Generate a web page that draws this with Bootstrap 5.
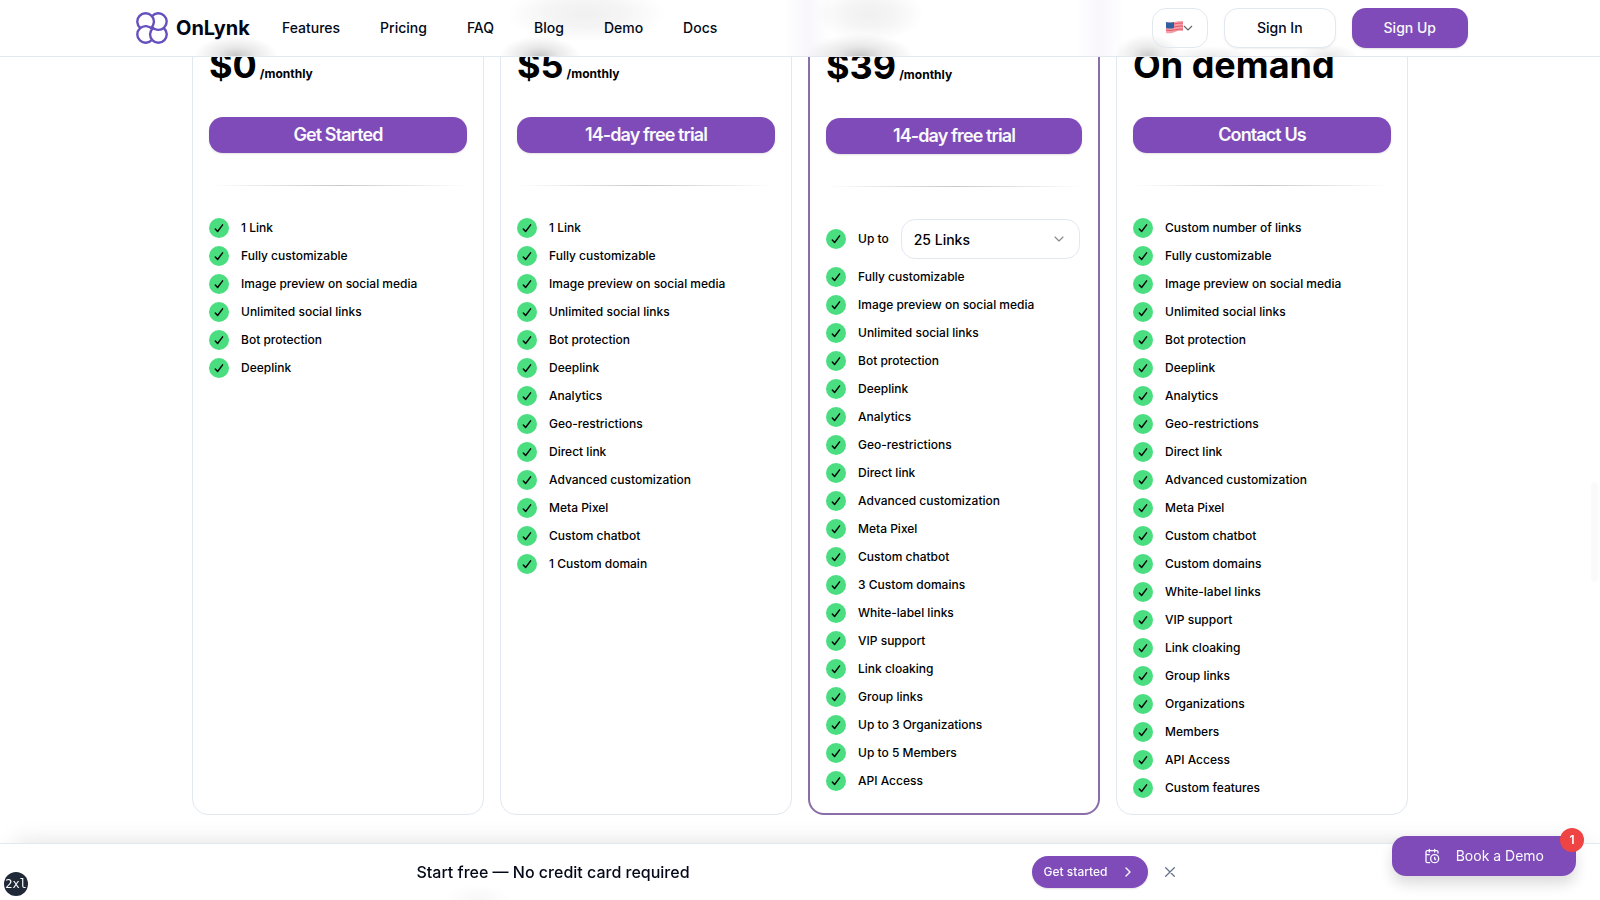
<!DOCTYPE html>
<html lang="en">
<head>
<meta charset="utf-8">
<meta name="viewport" content="width=device-width, initial-scale=1">
<title>OnLynk – Pricing</title>
<link rel="stylesheet" href="https://cdn.jsdelivr.net/npm/bootstrap@5.3.0/dist/css/bootstrap.min.css">
<style>
  :root { --brand: #7f4bb8; --line: #e2e8f0; --ink: #020817; }
  body { font-family: Inter, "Liberation Sans", sans-serif; color: #000; font-size: 14px; line-height: 20px; }
  .site-header { background: #fff; border-bottom: 1px solid var(--line); z-index: 1030; }
  .header-inner { max-width: 1400px; padding: 8px 32px 8px 36px; gap: 32px; position: relative; }
  .brand { font-size: 20px; font-weight: 700; line-height: 28px; color: var(--ink); gap: 8px; }
  .menu { gap: 40px; }
  .menu a { color: var(--ink); font-weight: 500; text-decoration: none; }
  .btn { --bs-btn-font-size: 14px; --bs-btn-font-weight: 500; --bs-btn-line-height: 20px; --bs-btn-border-radius: 14px; }
  .btn-brand { --bs-btn-color: #f8fafc; --bs-btn-bg: var(--brand); --bs-btn-border-color: var(--brand); --bs-btn-border-width: 0; --bs-btn-hover-color: #fff; --bs-btn-hover-bg: #7341a9; box-shadow: 0 1px 2px rgba(0,0,0,.12); }
  .btn-plain { --bs-btn-color: var(--ink); --bs-btn-bg: #fff; --bs-btn-border-color: var(--line); --bs-btn-hover-bg: #f8fafc; --bs-btn-hover-border-color: var(--line); box-shadow: 0 1px 2px rgba(0,0,0,.06); }
  .btn-header { height: 40px; padding: 0 32px; }
  .btn-lang { height: 40px; padding: 0 14px 0 13px; border: 1px solid var(--line); }
  .pricing, .frost { max-width: 1280px; padding: 0 32px; }
  .pricing { margin-top: -16px; }
  .plans { display: grid; grid-template-columns: repeat(4, minmax(0, 1fr)); gap: 16px; }
  /* soft shadows of the cards that scroll beneath the header */
  .frost { position: absolute; inset: 0; }
  .frost .plans { height: 100%; }
  .haze-1 { background: radial-gradient(42px 20px at 44px 100%, rgba(0,0,0,.22), rgba(0,0,0,.09) 45%, transparent); }
  .haze-2 { background: radial-gradient(40px 20px at 40px 100%, rgba(0,0,0,.22), rgba(0,0,0,.09) 45%, transparent), radial-gradient(80px 28px at 86px 14px, rgba(0,0,0,.06), rgba(0,0,0,.04) 50%, transparent); }
  .haze-3 { margin: 0 -24px; background: radial-gradient(54px 22px at 76px 100%, rgba(0,0,0,.22), rgba(0,0,0,.09) 45%, transparent), radial-gradient(54px 28px at 86px 14px, rgba(0,0,0,.06), rgba(0,0,0,.04) 50%, transparent), linear-gradient(90deg, transparent, rgba(127,75,184,.05) 24px, transparent 48px, transparent calc(100% - 48px), rgba(127,75,184,.05) calc(100% - 24px), transparent); }
  .haze-4 { background: radial-gradient(34px 22px at 32px 100%, rgba(0,0,0,.2), rgba(0,0,0,.08) 45%, transparent), radial-gradient(44px 10px at 94px 100%, rgba(0,0,0,.08), transparent), radial-gradient(30px 12px at 212px 100%, rgba(0,0,0,.09), transparent); }
  .plan { border: 1px solid var(--line); border-radius: 16px; padding: 16px; background: #fff; }
  .plan-featured { border: 2px solid #8a6ea8; }
  .price { display: flex; align-items: baseline; gap: 3px; height: 40px; font-size: 36px; line-height: 40px; font-weight: 700; margin: 44px 0 32px; }
  .price small { font-size: 12px; font-weight: 700; }
  .btn-plan { height: 36px; padding: 0 16px; --bs-btn-font-size: 18px; --bs-btn-font-weight: 600; --bs-btn-line-height: 28px; letter-spacing: -.05em; }
  .rule { height: 1px; border: 0; opacity: 1; margin: 32px 0; background: linear-gradient(90deg, transparent, #c9c9c9, transparent); }
  .feats { display: flex; flex-direction: column; gap: 8px; font-size: 12px; line-height: 20px; font-weight: 500; }
  .feats li { display: flex; align-items: center; gap: 12px; }
  .feats li::before { content: ""; flex: none; width: 20px; height: 20px; border-radius: 50%; background: #4ade80 url("data:image/svg+xml,%3Csvg xmlns='http://www.w3.org/2000/svg' viewBox='0 0 20 20' fill='none' stroke='black' stroke-width='1.4' stroke-linecap='round' stroke-linejoin='round'%3E%3Cpath d='M6.3 11.1l2.3 2.4 5-6.7'/%3E%3C/svg%3E"); }
  .feats select { height: 40px; font-size: 14px; font-weight: 500; border: 1px solid var(--line); border-radius: 14px; padding: 0 12px; color: #000; background-size: 16px; background-position: right 12px center; margin-right: 2px; background-image: url("data:image/svg+xml,%3Csvg xmlns='http://www.w3.org/2000/svg' viewBox='0 0 16 16' fill='none' stroke='%23888' stroke-width='1.1' stroke-linecap='round' stroke-linejoin='round'%3E%3Cpath d='M4 6l4 4 4-4'/%3E%3C/svg%3E"); }
  .promo { border-top: 1px solid var(--line); background: radial-gradient(34px 16px at 478px 100%, rgba(0,0,0,.03), transparent) #fff; height: 57px; gap: 342px; box-shadow: 0 -14px 24px -14px rgba(0,0,0,.12); z-index: 1020; font-size: 16px; font-weight: 500; color: var(--ink); }
  .btn-pill { --bs-btn-border-radius: 16px; --bs-btn-font-size: 12px; height: 32px; padding: 0 12px; gap: 12px; }
  .btn-dismiss { border: 0; background: none; padding: 0; color: #64748b; width: 28px; height: 28px; }
  .demo { right: 24px; bottom: 24px; z-index: 1040; }
  .btn-demo { height: 40px; padding: 0 32px; gap: 16px; --bs-btn-font-weight: 400; box-shadow: 0 8px 14px rgba(0,0,0,.14); }
  .count { top: -8px; right: -8px; width: 24px; height: 24px; background: #ef4444; color: #fff; font-size: 12px; font-weight: 600; }
  .bp { left: 4px; bottom: 4px; width: 24px; height: 24px; background: #1f2937; color: #fff; font: 12px "DejaVu Sans Mono", monospace; z-index: 1050; }
  .side-tab { right: 2px; top: 482px; width: 7px; height: 100px; border-radius: 4px; background: #fafafa; }
</style>
</head>
<body>
<header class="site-header fixed-top">
  <div class="frost mx-auto" aria-hidden="true"><div class="plans"><div class="haze-1"></div><div class="haze-2"></div><div class="haze-3"></div><div class="haze-4"></div></div></div>
  <div class="header-inner d-flex align-items-center mx-auto">
    <a class="brand d-flex align-items-center text-decoration-none" href="#">
      <svg width="32" height="32" viewBox="0 0 32 32" fill="none" stroke="#6750bd" stroke-width="2.4"><path d="M4.300 16A8.300 8.300 0 1 1 14.900 16M16 4.300A8.300 8.300 0 1 1 16 14.900M27.700 16A8.300 8.300 0 1 1 17.100 16M16 27.700A8.300 8.300 0 1 1 16 17.100"/></svg>
      OnLynk</a>
    <nav class="menu d-flex"><a href="#">Features</a><a href="#">Pricing</a><a href="#">FAQ</a><a href="#">Blog</a><a href="#">Demo</a><a href="#">Docs</a></nav>
    <div class="d-flex gap-3 ms-auto">
      <button class="btn btn-lang d-flex align-items-center" type="button" aria-label="Language">
        <svg width="17" height="16" viewBox="0 0 17 16"><path d="M0 2Q4 3 8 2T17 1V11Q13 10 9 12T0 13Z" fill="#f3a0a8"/><path d="M0 4Q4 5 8 4T17 3M0 7Q4 8 8 7T17 6M0 10Q4 11 8 10T17 9" stroke="#e65565" fill="none"/><path d="M0 2Q4 3 8 2V8Q4 9 0 8Z" fill="#2f5f9f"/></svg>
        <svg width="10" height="14" viewBox="0 0 10 14" fill="none" stroke="#666" stroke-width="1.2"><path d="M1 5l4 4 4-4"/></svg>
      </button>
      <button class="btn btn-plain btn-header" type="button">Sign In</button>
      <button class="btn btn-brand btn-header" type="button">Sign Up</button>
    </div>
  </div>
</header>

<main class="pricing mx-auto">
  <div class="plans">
    <section class="plan">
      <div class="price">$0<small>/monthly</small></div>
      <button class="btn btn-brand btn-plan w-100" type="button">Get Started</button>
      <hr class="rule">
      <ul class="feats list-unstyled mb-0"><li>1 Link</li><li>Fully customizable</li><li>Image preview on social media</li><li>Unlimited social links</li><li>Bot protection</li><li>Deeplink</li></ul>
    </section>
    <section class="plan">
      <div class="price">$5<small>/monthly</small></div>
      <button class="btn btn-brand btn-plan w-100" type="button">14-day free trial</button>
      <hr class="rule">
      <ul class="feats list-unstyled mb-0"><li>1 Link</li><li>Fully customizable</li><li>Image preview on social media</li><li>Unlimited social links</li><li>Bot protection</li><li>Deeplink</li><li>Analytics</li><li>Geo-restrictions</li><li>Direct link</li><li>Advanced customization</li><li>Meta Pixel</li><li>Custom chatbot</li><li>1 Custom domain</li></ul>
    </section>
    <section class="plan plan-featured">
      <div class="price">$39<small>/monthly</small></div>
      <button class="btn btn-brand btn-plan w-100" type="button">14-day free trial</button>
      <hr class="rule">
      <ul class="feats list-unstyled mb-0"><li><label class="text-nowrap" for="links">Up to</label><select class="form-select" id="links"><option>25 Links</option><option>50 Links</option></select></li><li>Fully customizable</li><li>Image preview on social media</li><li>Unlimited social links</li><li>Bot protection</li><li>Deeplink</li><li>Analytics</li><li>Geo-restrictions</li><li>Direct link</li><li>Advanced customization</li><li>Meta Pixel</li><li>Custom chatbot</li><li>3 Custom domains</li><li>White-label links</li><li>VIP support</li><li>Link cloaking</li><li>Group links</li><li>Up to 3 Organizations</li><li>Up to 5 Members</li><li>API Access</li></ul>
    </section>
    <section class="plan">
      <div class="price">On demand</div>
      <button class="btn btn-brand btn-plan w-100" type="button">Contact Us</button>
      <hr class="rule">
      <ul class="feats list-unstyled mb-0"><li>Custom number of links</li><li>Fully customizable</li><li>Image preview on social media</li><li>Unlimited social links</li><li>Bot protection</li><li>Deeplink</li><li>Analytics</li><li>Geo-restrictions</li><li>Direct link</li><li>Advanced customization</li><li>Meta Pixel</li><li>Custom chatbot</li><li>Custom domains</li><li>White-label links</li><li>VIP support</li><li>Link cloaking</li><li>Group links</li><li>Organizations</li><li>Members</li><li>API Access</li><li>Custom features</li></ul>
    </section>
  </div>
</main>

<aside class="promo fixed-bottom d-flex align-items-center justify-content-center">
  <span>Start free — No credit card required</span>
  <div class="d-flex align-items-center gap-2">
    <button class="btn btn-brand btn-pill d-flex align-items-center" type="button">Get started
      <svg width="16" height="16" viewBox="0 0 16 16" fill="none" stroke="currentColor" stroke-width="1.4" stroke-linecap="round" stroke-linejoin="round"><path d="M6 4l4 4-4 4"/></svg></button>
    <button class="btn-dismiss d-flex align-items-center justify-content-center" type="button" aria-label="Close"><svg width="10" height="10" viewBox="0 0 10 10" stroke="currentColor" stroke-width="1.3" stroke-linecap="round"><path d="M.7.7l8.6 8.6M9.3.7L.7 9.3"/></svg></button>
  </div>
</aside>

<div class="demo position-fixed">
  <button class="btn btn-brand btn-demo d-flex align-items-center" type="button">
    <svg width="16" height="16" viewBox="0 0 24 24" fill="none" stroke="currentColor" stroke-width="2" stroke-linecap="round" stroke-linejoin="round"><path d="M21 7.500V6a2 2 0 0 0-2-2H5a2 2 0 0 0-2 2v14a2 2 0 0 0 2 2h3.500M16 2v4M8 2v4M3 10h5M17.500 17.500 16 16.300V14"/><circle cx="16" cy="16" r="6"/></svg>
    Book a Demo</button>
  <span class="count position-absolute rounded-circle d-flex align-items-center justify-content-center">1</span>
</div>
<div class="bp position-fixed rounded-circle d-flex align-items-center justify-content-center">2xl</div>
<div class="side-tab position-fixed"></div>
<script src="https://cdn.jsdelivr.net/npm/bootstrap@5.3.0/dist/js/bootstrap.bundle.min.js"></script>
</body>
</html>
